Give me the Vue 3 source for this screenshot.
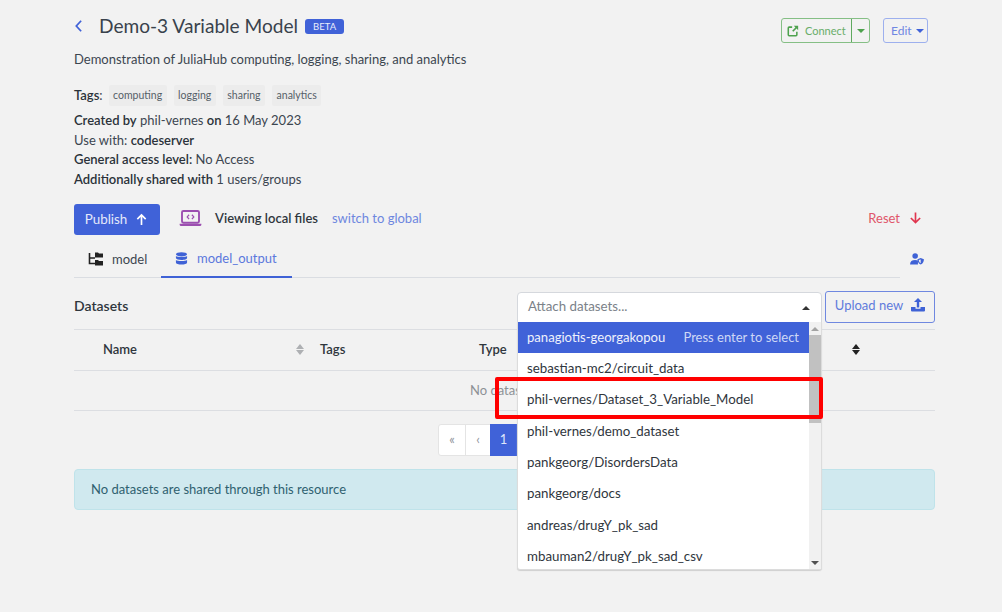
<script setup>
const tags = ['computing', 'logging', 'sharing', 'analytics']
const options = [
  'sebastian-mc2/circuit_data',
  'phil-vernes/Dataset_3_Variable_Model',
  'phil-vernes/demo_dataset',
  'pankgeorg/DisordersData',
  'pankgeorg/docs',
  'andreas/drugY_pk_sad',
  'mbauman2/drugY_pk_sad_csv'
]
</script>

<template>
  <main class="page">
    <header class="top">
      <div class="title-wrap">
        <svg class="back" viewBox="0 0 10 16" width="9" height="14"><path d="M8 2 2.500 8 8 14" fill="none" stroke="#4062d8" stroke-width="2"/></svg>
        <h1>Demo-3 Variable Model</h1>
        <span class="beta">BETA</span>
      </div>
      <div class="actions">
        <div class="connect">
          <span class="connect-main">
            <svg class="no-shrink" viewBox="0 0 14 14" width="12" height="12"><path d="M6 2.500H2.500a1 1 0 0 0-1 1v8a1 1 0 0 0 1 1h8a1 1 0 0 0 1-1V8" fill="none" stroke="#4ea24e" stroke-width="1.800"/><path d="M8 1h5v5l-1.800-1.800L7.400 8 6 6.600 9.800 2.800Z" fill="#4ea24e"/></svg>
            Connect
          </span>
          <span class="connect-caret"><i class="caret green"></i></span>
        </div>
        <div class="edit">Edit <i class="caret blue"></i></div>
      </div>
    </header>

    <p class="desc">Demonstration of JuliaHub computing, logging, sharing, and analytics</p>

    <div class="tags">
      <b>Tags</b><span class="colon">:</span>
      <span v-for="t in tags" :key="t" class="tag">{{ t }}</span>
    </div>
    <div class="meta">
      <div><b>Created by</b> phil-vernes <b>on</b> 16 May 2023</div>
      <div>Use with: <b>codeserver</b></div>
      <div><b>General access level:</b> No Access</div>
      <div><b>Additionally shared with</b> 1 users/groups</div>
    </div>

    <div class="toolbar">
      <button class="publish">Publish
        <svg viewBox="0 0 14 14" width="13" height="13"><path d="M7 13V2M2.500 6.500 7 2l4.500 4.500" fill="none" stroke="#fff" stroke-width="1.800"/></svg>
      </button>
      <svg class="laptop" viewBox="0 0 24 18" width="23" height="17"><rect x="3" y="1" width="18" height="12.500" rx="1.500" fill="none" stroke="#9c4fb0" stroke-width="2"/><path d="M0.500 14.500h23v1a1.500 1.500 0 0 1-1.500 1.500H2a1.500 1.500 0 0 1-1.500-1.500Z" fill="#9c4fb0"/><path d="M10.500 5 8.500 7.300l2 2.300M13.500 5l2 2.300-2 2.300" fill="none" stroke="#9c4fb0" stroke-width="1.300"/></svg>
      <span class="viewing">Viewing local files</span>
      <span class="switch">switch to global</span>
      <span class="reset">Reset
        <svg viewBox="0 0 14 14" width="13" height="14"><path d="M7 1v11M2 7 7 12l5-5" fill="none" stroke="#e0364f" stroke-width="1.800"/></svg>
      </span>
    </div>

    <div class="tabs-row">
      <nav class="tabs">
        <div class="tab first">
          <svg class="no-shrink" viewBox="0 0 16 14" width="16" height="14"><path d="M1.500 1v10.500H7M1.500 6H7" fill="none" stroke="#222" stroke-width="1.600"/><path d="M7 .5h3l1 1h4v4H7ZM7 8h3l1 1h4v4.500H7Z" fill="#222"/></svg>
          model
        </div>
        <div class="tab active">
          <svg class="no-shrink" viewBox="0 0 14 14" width="13" height="13" fill="#3f62d6"><ellipse cx="7" cy="2.500" rx="6" ry="2.300"/><path d="M1 4.300c1.500 1.500 10.500 1.500 12 0v2.200c0 2.800-12 2.800-12 0ZM1 8.500c1.500 1.500 10.500 1.500 12 0v2.800c0 2.900-12 2.900-12 0Z"/></svg>
          model_output
        </div>
      </nav>
      <svg class="user-shield" viewBox="0 0 15 13" width="14" height="12"><circle cx="5.500" cy="3.200" r="3" fill="#3f62d6"/><path d="M0 12.500c0-3.500 2-5 5.500-5 1.300 0 2.300.2 3 .6v4.400Z" fill="#3f62d6"/><path d="M11.500 5.500 15 6.800c0 3-1.300 4.800-3.500 5.700C9.300 11.600 8 9.800 8 6.800Z" fill="#3f62d6"/><path d="M11.500 7v4.200c-1.200-.6-2-1.900-2.100-3.500Z" fill="#f2f2f2"/></svg>
    </div>

    <section class="datasets-head">
      <h2>Datasets</h2>
      <div class="select-box">
        <span class="placeholder">Attach datasets...</span>
        <i class="caret-up"></i>
        <div class="menu">
          <div class="list">
            <div class="opt selected"><span>panagiotis-georgakopou</span><span class="hint">Press enter to select</span></div>
            <div v-for="o in options" :key="o" class="opt">{{ o }}</div>
          </div>
          <div class="scrollbar">
            <i class="sb-up"></i>
            <div class="thumb"></div>
            <i class="sb-down"></i>
          </div>
        </div>
        <div class="highlight"></div>
      </div>
      <button class="upload">Upload new
        <svg viewBox="0 0 14 15" width="14" height="15" fill="#3f62d6"><path d="M7 0 11 4H8.200v5.500H5.800V4H3Z"/><path d="M0 9h4.500v1.800h5V9H14v3.500a1 1 0 0 1-1 1H1a1 1 0 0 1-1-1Z"/></svg>
      </button>
    </section>

    <div class="table">
      <div class="thead">
        <span class="th-name">Name</span>
        <span class="sort"><i class="s-up"></i><i class="s-down"></i></span>
        <span class="th-tags">Tags</span>
        <span class="th-type">Type</span>
        <span class="sort dark"><i class="s-up"></i><i class="s-down"></i></span>
      </div>
      <div class="empty">No datasets</div>
    </div>

    <div class="pager">
      <span class="pg">«</span><span class="pg">‹</span><span class="pg on">1</span>
    </div>

    <div class="alert">No datasets are shared through this resource</div>
  </main>
</template>

<style>
html, body { margin: 0; background: #f2f2f2; }
</style>

<style scoped>
.page {
  box-sizing: border-box;
  width: 1002px;
  height: 612px;
  overflow: hidden;
  padding: 0 67px 0 74px;
  background: #f2f2f2;
  font-family: "Lato", "Open Sans", sans-serif;
  font-size: 13px;
  color: #3c4650;
  display: flex;
  flex-direction: column;
}
b { font-weight: 600; color: #2b323a; }
.no-shrink { flex: none; }
.top { display: flex; justify-content: space-between; height: 44px; align-items: flex-start; }
.title-wrap { display: flex; align-items: center; margin-top: 14px; height: 24px; }
.back { margin-right: 16px; }
h1 { margin: -2px 0 0; font-size: 19.100px; font-weight: 400; color: #39424c; }
.beta { margin-left: 7px; background: #4062d8; color: #e8edfb; border-radius: 3px; font-size: 9.500px; padding: 0 8px; height: 15px; line-height: 15px; }
.actions { display: flex; gap: 13px; margin: 18px 7px 0 0; }
.connect { display: flex; height: 25px; box-sizing: border-box; width: 89px; border: 1px solid #85bf85; border-radius: 3px; color: #69ad69; font-size: 11px; }
.connect-main { flex: 1; display: flex; align-items: center; gap: 6px; padding-left: 5px; border-right: 1px solid #5fa95f; }
.connect-caret { width: 17px; display: flex; align-items: center; justify-content: center; }
.edit { height: 25px; box-sizing: border-box; width: 45px; border: 1px solid #9db0ee; border-radius: 3px; color: #6f87e2; padding-left: 7px; display: flex; align-items: center; gap: 4px; font-size: 12px; }
.caret { display: inline-block; border: 4px solid transparent; border-bottom: 0; border-top-width: 4px; }
.caret.green { border-top-color: #4ea24e; }
.caret.blue { border-top-color: #4062d8; }
.desc { margin: 7px 0 0; line-height: 17px; height: 17px; }
.tags { display: flex; align-items: center; margin-top: 16px; height: 22px; }
.colon { margin-right: 6px; }
.tag { background: #ececec; border-radius: 2px; font-size: 10.500px; height: 21px; line-height: 21px; padding: 0 4.500px; margin-right: 7px; color: #566068; }
.meta { margin-top: 5px; line-height: 19.700px; }
.toolbar { display: flex; align-items: center; margin-top: 14px; height: 31px; }
.publish { width: 86px; height: 31px; background: #4062d8; color: #e4e9fa; border: 0; border-radius: 3px; font: inherit; font-size: 13.400px; display: flex; align-items: center; justify-content: center; gap: 8px; padding: 0 1px 0 0; }
.laptop { margin-left: 19px; margin-right: 13px; margin-bottom: 2px; }
.viewing { font-weight: 600; color: #2f363d; padding-bottom: 2px; }
.switch { margin-left: 14px; color: #6d86df; padding-bottom: 2px; }
.reset { margin-left: auto; margin-right: 13px; color: #e0566a; display: flex; align-items: center; gap: 9px; padding-bottom: 2px; }
.tabs-row { display: flex; margin-top: 6px; height: 37px; }
.tabs { width: 826px; box-sizing: border-box; border-bottom: 1px solid #dadde2; display: flex; }
.tab { display: flex; align-items: center; gap: 8px; padding: 0 14px 1px; height: 37px; box-sizing: border-box; color: #3c4650; }
.tab.first { width: 87px; }
.tab.active { gap: 9px; color: #5b78dd; border-bottom: 2px solid #3f62d6; padding-top: 0; padding-bottom: 0; width: 131px; }
.user-shield { margin-left: 10px; margin-top: 12px; }
.datasets-head { display: flex; align-items: flex-start; margin-top: 13px; height: 38px; position: relative; }
h2 { margin: 6px 0 0; font-size: 14px; font-weight: 600; color: #2f363d; width: 443px; }
.select-box { position: relative; z-index: 2; box-sizing: border-box; width: 305px; height: 31px; margin-top: 1px; border: 1px solid #d5d8dd; border-radius: 4px 4px 0 0; background: #fff; color: #7b8289; font-size: 13.300px; display: flex; align-items: center; padding: 0 10px; }
.placeholder { margin-top: -2px; }
.caret-up { position: absolute; right: 11px; top: 13px; border: 4px solid transparent; border-top: 0; border-bottom: 4px solid #333; }
.menu { position: absolute; left: -1px; top: 29px; width: 305px; height: 248px; background: #fff; box-shadow: 0 1px 1px #cfcfcf; border: 1px solid #dcdcdc; border-top: 0; display: flex; box-sizing: border-box; border-radius: 0 0 3px 3px; }
.list { flex: 1; }
.opt { height: 31.400px; line-height: 31.400px; padding: 0 9px; color: #2f363d; display: flex; justify-content: space-between; white-space: nowrap; }
.opt.selected { background: #4062d8; color: #eef1fc; height: 31px; line-height: 31px; font-size: 13.100px; }
.hint { color: #cfd8f6; font-size: 13px; padding-right: 1px; }
.scrollbar { width: 12px; background: #f1f1f1; position: relative; }
.thumb { position: absolute; top: 13px; left: 0; right: 0; height: 88px; background: #c1c1c1; }
.sb-up { position: absolute; top: 5px; left: 2px; border: 4px solid transparent; border-top: 0; border-bottom: 4px solid #a3a3a3; }
.sb-down { position: absolute; bottom: 4px; left: 2px; border: 4px solid transparent; border-bottom: 0; border-top: 4px solid #505050; }
.highlight { position: absolute; left: -23px; top: 84px; width: 328px; height: 42px; box-sizing: border-box; border: 4px solid #f00; border-radius: 2px; z-index: 3; pointer-events: none; }
.upload { box-sizing: border-box; width: 110px; height: 32px; margin-left: 3px; padding: 0 0 3px; background: transparent; border: 1px solid #6f88e0; border-radius: 3px; color: #5f7bdc; font: inherit; display: flex; align-items: center; justify-content: center; gap: 8px; }
.thead { display: flex; align-items: center; height: 42px; padding-bottom: 1px; box-sizing: border-box; border-top: 1px solid #dcdee2; border-bottom: 1px solid #dcdee2; font-weight: 600; color: #2f363d; }
.th-name { margin-left: 29px; width: 193px; }
.sort { display: inline-flex; flex-direction: column; gap: 1px; width: 9px; }
.sort i { border: 4px solid transparent; width: 0; height: 0; }
.s-up { border-top: 0 !important; border-bottom: 5px solid #aeb0b3 !important; }
.s-down { border-bottom: 0 !important; border-top: 5px solid #aeb0b3 !important; }
.sort.dark { margin-left: 346px; }
.sort.dark .s-up { border-bottom-color: #222 !important; }
.sort.dark .s-down { border-top-color: #222 !important; }
.th-tags { margin-left: 15px; width: 159px; }
.th-type { width: 27px; }
.empty { height: 40px; line-height: 39px; box-sizing: border-box; border-bottom: 1px solid #dcdee2; padding-left: 396px; color: #8d9196; }
.pager { display: flex; margin-top: 13px; margin-left: 364px; height: 32px; }
.pg { box-sizing: border-box; width: 26px; background: #fff; border: 1px solid #e4e4e4; margin-right: -1px; text-align: center; line-height: 29px; color: #8f949a; }
.pg:first-child { width: 28px; border-radius: 3px 0 0 3px; }
.pg.on { width: 27px; background: #4062d8; color: #dfe6fb; border-color: #4062d8; }
.alert { margin-top: 13px; height: 41px; line-height: 39px; box-sizing: border-box; background: #d0e9ef; border: 1px solid #bfe3ea; border-radius: 4px; padding-left: 16px; color: #2f6170; }
</style>
